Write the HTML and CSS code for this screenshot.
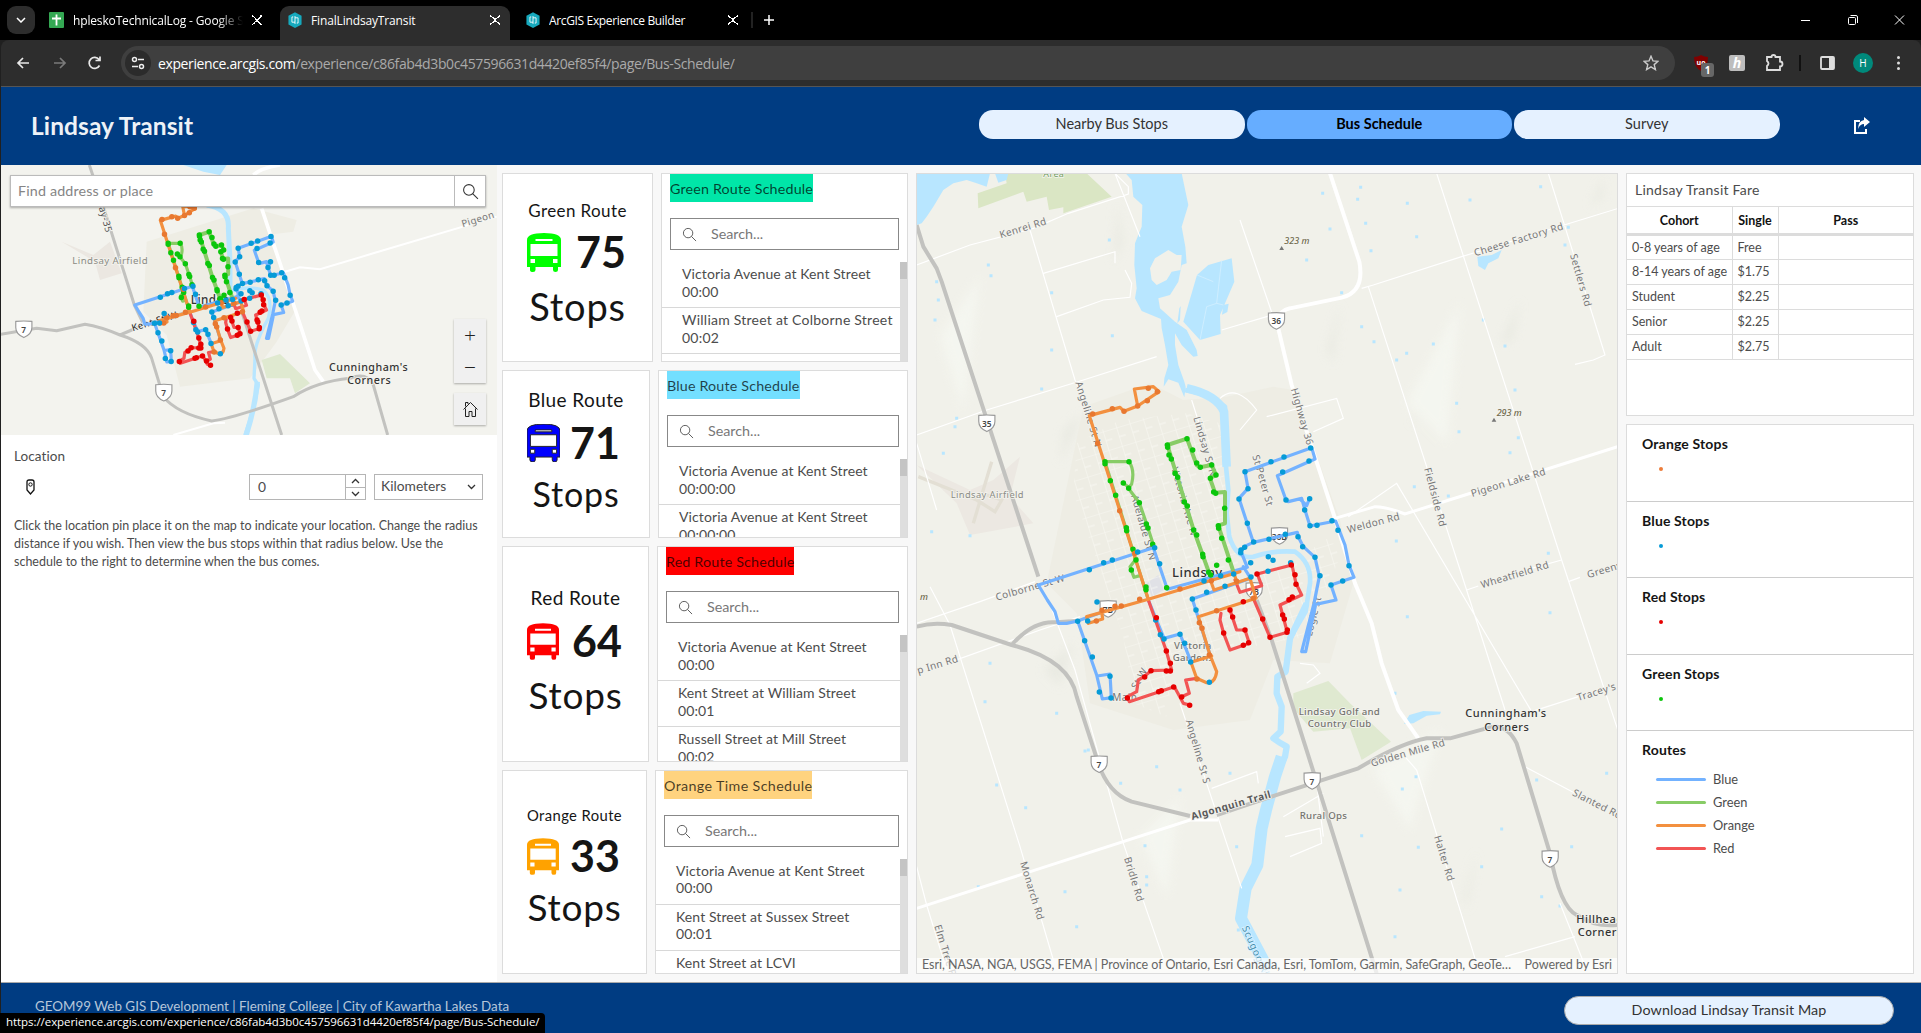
FILE: index.html
```html
<!DOCTYPE html>
<html lang="en">
<head>
<meta charset="utf-8">
<title>FinalLindsayTransit</title>
<link rel="stylesheet" href="styles.css">
</head>
<body>
<svg class="defs" width="0" height="0" aria-hidden="true">
  <defs>
    <symbol id="bus" viewBox="0 0 34 39"><path fill-rule="evenodd" d="M0 7Q0 0 17 0T34 7V34H31V37Q31 39 28.500 39Q26 39 26 37V34H8.500V37Q8.500 39 6 39Q3 39 3 37V34H0ZM8.500 6V8H25.500V6ZM3.500 11V23H30.500V11ZM3.500 26V30H8V26ZM26 26V30H30.500V26Z"/></symbol>
    <symbol id="lens" viewBox="0 0 16 16"><circle cx="6.500" cy="6.500" r="5" fill="none" stroke="currentColor"/><path d="M10 10l5 5" stroke="currentColor" fill="none"/></symbol>
    <symbol id="shield" viewBox="0 0 20 20" overflow="visible"><path d="M1.500 1.500Q10 .5 18.500 1.500V8Q18.500 15 10 18.500Q1.500 15 1.500 8Z" fill="#fff" stroke="#999" stroke-width="1.200"/></symbol>
    <symbol id="hex" viewBox="0 0 16 18"><path d="M8 0l7.500 4v10L8 18 .5 14V4z" fill="#16a9bd"/><path d="M6 5.500H4.500v6H8m2 1h1.500v-6H8m0-2v9" stroke="#fff" fill="none"/></symbol>
    <pattern id="streets" width="42" height="58" patternUnits="userSpaceOnUse" patternTransform="rotate(-17)"><path d="M0 0H42M0 0V58M0 29H21" fill="none" stroke="#fbfbf7" stroke-width="3.500"/></pattern>
    <filter id="soft"><feGaussianBlur stdDeviation="14"/></filter>
    <g id="routes">
      <path class="r blue" d="M340 533L-5 645 22 690 45 725 55 760 80 760 113 753 170 915 187 987 214 983 210 912 172 918M340 533L382 658 622 592 603 545 612 530 640 517 772 487 777 505 790 530 825 562 838 620 822 700 785 845 797 845 827 703 888 690 873 645 942 622 927 585 915 525 887 453 810 468 795 420 785 385 745 395 738 390 712 317 825 267 815 233 615 305 624 355 597 385 640 517M780 387L800 407 808 387M325 690L372 805 420 792 453 875M610 590L632 625 457 687 480 760 510 855M115 752L185 727"/>
      <path class="r green" d="M195 275L267 275Q285 300 275 342L265 355 298 398 320 462 343 533M248 338L267 352M195 275L322 680M290 565L270 590 282 622 300 617"/>
      <path class="r green wide" d="M508 610L461 480 382 225 441 206 470 285 480 292 515 285 528 315 510 325 525 368 555 366 555 460 535 467 582 610"/>
      <path class="r red" d="M325 690L378 840 395 900 333 902 312 920 295 930 290 965 262 980 268 995 403 950 430 1000 449 1005M425 980L448 970 437 930 470 925M543 730L540 750 551 790 570 840 628 820 615 780 590 780 570 720M640 685L690 802 742 787 720 705 785 675 768 640 756 585 652 612 665 647 600 667 585 630"/>
      <path class="r orange" d="M148 137L240 112 252 124 293 108 283 57 340 50 357 65 293 108M148 137L325 688 600 605M325 688L140 740 145 760 188 747 185 725M512 632L522 660 630 625 648 685 475 740 510 855 530 905Q525 940 500 938L470 925 453 877 515 858M580 605L592 640"/>
      <path class="s green" d="M195 275h0M195 281h0M267 275h0M211 332h0M227 376h0M250 339h0M266 355h0M298 398h0M259 473h0M260 482h0M319 462h0M324 474h0M279 538h0M288 570h0M274 600h0M318 651h0M318 659h0M338 523h0M382 225h0M383 232h0M441 206h0M458 240h0M387 255h0M394 267h0M470 279h0M481 292h0M515 285h0M528 315h0M511 325h0M405 310h0M413 322h0M521 366h0M527 370h0M433 396h0M442 408h0M554 415h0M535 467h0M536 475h0M461 480h0M470 495h0M545 505h0M488 553h0M489 560h0M565 570h0M530 586h0M506 607h0M512 615h0M380 653h0"/>
      <path class="s orange" d="M158 132h0M217 116h0M252 124h0M293 108h0M322 92h0M325 55h0M352 65h0M173 220h0M239 422h0M285 550h0M420 657h0M299 688h0M225 709h0M244 708h0M186 721h0M169 753h0M514 632h0M590 634h0M530 722h0M640 685h0M478 758h0M508 855h0M471 927h0M486 775h0"/>
      <path class="s blue" d="M148 599h0M191 578h0M217 570h0M293 546h0M344 533h0M359 581h0M171 696h0M113 754h0M143 753h0M134 812h0M157 861h0M210 919h0M178 966h0M213 984h0M347 750h0M361 794h0M372 807h0M420 793h0M434 820h0M452 876h0M508 937h0M468 720h0M457 687h0M500 667h0M555 649h0M492 633h0M542 617h0M581 612h0M633 621h0M632 578h0M603 540h0M602 548h0M614 532h0M641 516h0M687 508h0M736 493h0M774 500h0M788 530h0M825 562h0M840 617h0M873 645h0M908 633h0M927 587h0M894 481h0M876 452h0M831 466h0M810 467h0M794 420h0M809 386h0M738 390h0M728 306h0M807 273h0M812 234h0M732 261h0M693 275h0M615 305h0M624 356h0M597 387h0M622 460h0M685 560h0M699 571h0M684 604h0M752 578h0"/>
      <path class="s red" d="M349 743h0M379 843h0M391 880h0M379 903h0M391 903h0M333 902h0M314 921h0M262 984h0M356 965h0M364 962h0M401 951h0M425 981h0M449 1006h0M570 720h0M578 741h0M551 789h0M615 780h0M626 818h0M610 826h0M610 695h0M668 747h0M690 802h0M741 787h0M742 780h0M733 747h0M728 735h0M747 689h0M757 681h0M768 643h0M765 614h0M754 585h0M651 612h0"/>
    </g>
  </defs>
</svg>
<div class="window">
  <div class="tabs">
    <button class="tabmenu"><svg width="10" height="6" viewBox="0 0 10 6"><path d="M1 1l4 4 4-4" fill="none" stroke="#fff" stroke-width="1.500"/></svg></button>
    <div class="tab first"><svg width="15" height="16" viewBox="0 0 15 16"><rect width="15" height="16" rx="1" fill="#34a853"/><path d="M7.500 2.500v11M3 6.500h9" stroke="#fff" stroke-width="1.800"/></svg><span class="tabtext fade">hpleskoTechnicalLog - Google S</span><i class="x"></i></div>
    <div class="tab active"><svg width="14" height="16"><use href="#hex"/></svg><span class="tabtext">FinalLindsayTransit</span><i class="x"></i></div>
    <div class="tab last"><svg width="14" height="16"><use href="#hex"/></svg><span class="tabtext">ArcGIS Experience Builder</span><i class="x"></i></div>
    <svg class="plus" width="28" height="20" viewBox="0 0 28 20"><path d="M2 2v16" stroke="#444"/><path d="M14 10h10M19 5v10" stroke="#fff" stroke-width="1.500"/></svg>
    <svg class="wincontrols" width="110" height="20" viewBox="0 0 110 20" fill="none" stroke="#fff"><path d="M4 10.500h9M98 5.500l9 9m0-9l-9 9"/><rect x="51.500" y="7.500" width="7" height="7" rx="1"/><path d="M53.500 5.500h5.500q1.500 0 1.500 1.500v6"/></svg>
  </div>
  <div class="toolbar">
    <svg class="nav" width="90" height="20" viewBox="0 0 90 20" fill="none" stroke-width="1.700"><path d="M18 10H7m5-5l-5 5 5 5" stroke="#e8e8e8"/><path d="M43 10h11m-5-5l5 5-5 5" stroke="#7a7a7a"/><path d="M88 6.500a5.500 5.500 0 1 0 .5 6M89 3.500v4h-4.500" stroke="#e8e8e8"/></svg>
    <div class="omnibox"><span class="site"><svg width="14" height="14" viewBox="0 0 14 14" fill="none" stroke="#eee" stroke-width="1.500"><circle cx="3.500" cy="3.500" r="2"/><path d="M7 3.500h6M1 10.500h6"/><circle cx="10.500" cy="10.500" r="2"/></svg></span><span class="url"><b>experience.arcgis.com</b>/experience/c86fab4d3b0c457596631d4420ef85f4/page/Bus-Schedule/</span><svg class="star" width="16" height="16" viewBox="0 0 16 16"><path d="M8 1.200l2 4.700 5 .4-3.800 3.300 1.200 5L8 11.900l-4.400 2.700 1.200-5L1 6.300l5-.4z" fill="none" stroke="#ccc" stroke-width="1.400"/></svg></div>
    <div class="exts">
      <svg width="228" height="30" viewBox="1690 48 228 30"><path d="M1701 55q3 2 7 2 0 10-7 14-7-4-7-14 4 0 7-2z" fill="#800000"/><text x="1701" y="65" class="ub">uo</text><rect x="1701" y="63" width="13" height="14" rx="3" fill="#666"/><text x="1707.500" y="74" class="badge">1</text><rect x="1729" y="55" width="16" height="16" rx="2" fill="#bdbdbd"/><text x="1737" y="68" class="honey">h</text><path d="M1767 57h4.500a2 2 0 0 1 4 0h4.500v4.500a2.500 2.500 0 0 1 0 5v3.500h-13v-4q3-2.500 0-5z" fill="none" stroke="#ddd" stroke-width="1.800"/><path d="M1800 55v16" stroke="#111" stroke-width="2"/><rect x="1821" y="57" width="13" height="12" rx="1" fill="none" stroke="#ddd" stroke-width="1.800"/><path d="M1829 57h5v12h-5z" fill="#ddd"/><circle cx="1863" cy="63" r="10" fill="#00897b"/><text x="1863" y="67" class="ava">H</text><path d="M1898.500 57.500h0M1898.500 63h0M1898.500 68.500h0" stroke="#ddd" stroke-width="3" stroke-linecap="round"/></svg>
    </div>
  </div>
  <header class="head">
    <h1>Lindsay Transit</h1>
    <nav><a>Nearby Bus Stops</a><a class="on">Bus Schedule</a><a>Survey</a></nav>
    <svg class="share" width="17" height="18" viewBox="0 0 17 18"><path d="M7 4H2v12h11v-4" fill="none" stroke="#fff" stroke-width="2"/><path d="M11 0l6 5-6 5V7q-4 0-6 5 0-8 6-9z" fill="#fff"/></svg>
  </header>
  <main>
    <section class="left">
      <div class="minimap">
        <svg width="496" height="270" viewBox="1 165 496 270">
          <rect x="1" y="165" width="496" height="270" fill="#f3f3ee"/>
          <g transform="translate(0 165) scale(.33333)">
            <path d="M440 230L760 130 890 165 880 200 800 210 860 340 890 430 830 530 750 640 540 665 500 510 430 440Z" fill="#eeede4"/>
            <path d="M185 230L280 270 330 230 365 325 300 345 285 290Z" fill="#ebe7e1"/>
            <path d="M785 585L840 567 930 655 885 685 870 640 800 640Z" fill="#dfe9d0"/>
            <path d="M550 0H680L660 30 610 20Z" fill="#b8e6ff"/>
            <path d="M620 120Q690 130 685 190L690 290 690 380" class="water" stroke-width="15"/>
            <path d="M690 380Q740 360 790 375 820 400 805 460 760 540 765 580L762 640 775 660Q765 720 735 810" class="water" stroke-width="10"/>
            <path d="M772 650Q765 730 737 815" class="water" stroke-width="16"/>
            <g class="lane"><path d="M760 30Q780 10 840 0M785 130L850 325 945 615 970 650" stroke-width="11"/><path d="M850 322L900 307 960 313 1120 265 1490 155M520 810L640 775 675 773" stroke-width="6"/></g>
            <g class="hwy" stroke-width="9"><path d="M268 0L310 125 403 420 432 480"/><path d="M0 508L110 490 170 497 255 478Q300 485 360 510 440 535 455 580L490 695Q530 745 635 768 700 760 880 695 950 650 1050 640 1100 620 1120 660L1163 810M360 510L430 480 565 440M725 440L845 810" fill="none"/></g>
            <g class="maplabel" font-size="29"><text x="217" y="296" fill="#8b8b84">Lindsay Airfield</text><text x="1388" y="187" transform="rotate(-17 1388 187)">Pigeon</text><text x="296" y="128" transform="rotate(74 296 128)" fill="#555">ay-35</text></g>
            <g class="place" font-size="35"><text x="572" y="416">Lindsay</text><text x="987" y="618" font-size="32">Cunningham's</text><text x="1042" y="656" font-size="32">Corners</text><text x="398" y="499" font-size="28" transform="rotate(-17 398 499)">Kent St W</text></g>
            <g transform="translate(407 97.500) scale(.5)"><use href="#routes" class="mini"/></g>
            <use href="#shield" x="43" y="465" width="57" height="57"/><use href="#shield" x="463" y="655" width="57" height="57"/>
            <g class="num"><text x="71" y="504">7</text><text x="491" y="694">7</text></g>
          </g>
        </svg>
        <div class="find"><span>Find address or place</span><i><svg width="17" height="17"><use href="#lens"/></svg></i></div>
        <div class="zoom"><b>+</b><b>−</b></div>
        <div class="home"><svg width="15" height="16" viewBox="0 0 15 16" fill="none" stroke="#222"><path d="M.5 8.500L7.500 1.500l7 7M2.500 7.500V15.500h3.500v-5h3v5h3.500V7.500M2.500 5.500V1.500h2.500V3"/></svg></div>
      </div>
      <div class="location">
        <h2>Location</h2>
        <div class="controls">
          <svg width="10" height="16" viewBox="0 0 10 16" fill="none" stroke="#111"><path d="M1 3Q1 1 3 1H6Q8 1 8 3V11L4.500 15 1 11Z" stroke-width="1.300"/><circle cx="4.500" cy="5.500" r="1.700"/></svg>
          <div class="number"><span>0</span><i><svg width="9" height="6" viewBox="0 0 9 6"><path d="M1 5l3.500-3.500L8 5"/></svg></i><i><svg width="9" height="6" viewBox="0 0 9 6"><path d="M1 1l3.500 3.500L8 1"/></svg></i></div>
          <div class="unit"><span>Kilometers</span><svg width="9" height="6" viewBox="0 0 9 6"><path d="M1 1l3.500 3.500L8 1"/></svg></div>
        </div>
        <p>Click the location pin place it on the map to indicate your location. Change the radius<br>distance if you wish. Then view the bus stops within that radius below. Use the<br>schedule to the right to determine when the bus comes.</p>
      </div>
    </section>
    <section class="schedules">
      <div class="row green-row">
        <div class="card stat"><div class="label">Green Route</div><div class="count"><svg width="34" height="39"><use href="#bus"/></svg><strong>75</strong></div><div class="stops">Stops</div></div>
        <div class="card sched"><div class="tag">Green Route Schedule</div><div class="search"><svg width="15" height="15"><use href="#lens"/></svg><span>Search...</span></div><div class="list"><div class="items"><div>Victoria Avenue at Kent Street<br>00:00</div><div class="spaced">William Street at Colborne Street<br>00:02</div></div><div class="bar"><i></i></div></div></div>
      </div>
      <div class="row blue-row">
        <div class="card stat"><div class="label">Blue Route</div><div class="count"><svg width="33" height="38"><use href="#bus"/></svg><strong>71</strong></div><div class="stops">Stops</div></div>
        <div class="card sched"><div class="tag">Blue Route Schedule</div><div class="search"><svg width="15" height="15"><use href="#lens"/></svg><span>Search...</span></div><div class="list"><div class="items"><div>Victoria Avenue at Kent Street<br>00:00:00</div><div>Victoria Avenue at Kent Street<br>00:00:00</div></div><div class="bar"><i></i></div></div></div>
      </div>
      <div class="row red-row">
        <div class="card stat"><div class="label">Red Route</div><div class="count"><svg width="32" height="37"><use href="#bus"/></svg><strong>64</strong></div><div class="stops">Stops</div></div>
        <div class="card sched"><div class="tag">Red Route Schedule</div><div class="search"><svg width="15" height="15"><use href="#lens"/></svg><span>Search...</span></div><div class="list"><div class="items"><div>Victoria Avenue at Kent Street<br>00:00</div><div>Kent Street at William Street<br>00:01</div><div>Russell Street at Mill Street<br>00:02</div></div><div class="bar"><i></i></div></div></div>
      </div>
      <div class="row orange-row">
        <div class="card stat"><div class="label">Orange Route</div><div class="count"><svg width="32" height="37"><use href="#bus"/></svg><strong>33</strong></div><div class="stops">Stops</div></div>
        <div class="card sched"><div class="tag">Orange Time Schedule</div><div class="search"><svg width="15" height="15"><use href="#lens"/></svg><span>Search...</span></div><div class="list"><div class="items"><div>Victoria Avenue at Kent Street<br>00:00</div><div>Kent Street at Sussex Street<br>00:01</div><div>Kent Street at LCVI</div></div><div class="bar"><i></i></div></div></div>
      </div>
    </section>
    <section class="card map">
      <svg width="700" height="799" viewBox="917 174 700 799">
        <rect x="917" y="174" width="700" height="799" fill="#f1f1ea"/>
        <g transform="translate(1040 370) scale(.33333)">
          <g filter="url(#soft)" fill="#e7e8e0" opacity=".75"><path d="M230-500l20 120-30 60zM70 180L130 130 60 280zM860-60l40-140-20 180zM1380-80l60-130-20 120zM1270 1580l40-140-30 180zM10 900l90-80-40 130zM1130 140l20-60-40 90zM1650-490l40-90 0 60z"/><path fill="#f6f8f2" d="M-300-100l120-180-50 400zM300 1400l120-120-40 300zM1000 1200l200-120-90 300zM1100 100l160-300-40 420z"/></g>
          <path d="M130 110L330 40 430 90 560 80 700 50 760 60 900 450 940 640 870 880 700 870 630 1050 400 1080 150 1000 110 730 20 640Z" fill="#eeede4"/>
          <path d="M-370 285L-210 360-140 330-60 260-90 380-20 460-210 495-250 400Z" fill="#ece8e2"/>
          <path d="M-365 320L-190 390M-145 275L-200 460M-190 390L-135 425-115 390-160 375" fill="none" stroke="#e3dfd4" stroke-width="10"/>
          <path d="M-105-590H140L215-520 70-470 70-488 27-480 20-520-40-505-50-535-185-485-187-530-100-560Z" fill="#dae6c4"/>
          <path d="M760 970L865 933 930 1000 1053 1115 965 1170 930 1075 820 1085 760 1015Z" fill="#dfe9d0"/>
          <path d="M320 640L355 615 372 660 335 680Z" fill="#e0e1e6"/>
          <path d="M110 220L240 150 440 130 540 160 560 400 590 560 610 620 780 560 870 500 900 560 800 800 690 820 520 850 400 880 380 1040 280 1000 250 800 180 600 100 370Z" fill="url(#streets)" opacity=".75"/>
          <path fill="#b8e6ff" d="M257-590L275-570 280-520 307-495 305-430 285-380 283-315 290-245 285-215 305-177 363-153 365-125 375-75 385-15 373 25 371 50 385 28 415 38 433 82 437 50 433 35 415-15 405-75 405-110 425-75 460-40 473-42 470-60 440-120 405-145 360-185 355-215 390-225 415-265 425-315 440-320 436-370 425-430 445-495 425-590Z"/>
          <path fill="#f1f1ea" d="M330-305L345-335 385-360 410-345 425-345 422-300 395-295 380-270 350-255 335-270Z"/>
          <path fill="#b8e6ff" d="M471-285L505-315 575-335 583-265 540-165 542-108 480-90 430-145ZM550-195l16-4-4 25-16 8zM412-140L418-185 422-192 420-150ZM-370-590H-150L-160-550-190-560-220-570-260-560-290-540-320-490-340-460-355-440-370-435ZM-135-590h40l-5 20-25 8zM1312-340L1355-345 1385-360 1375-335 1345-320 1335-300 1315-312ZM1092 1062L1108 1035 1150 1023 1203 1025 1200 1033 1160 1037 1120 1060Z"/>
          <path d="M550-195L530-200 500-190 480-90M471-285L520-265M530-200L545-330" fill="none" stroke="#d9f1ff" stroke-width="2"/>
          <path d="M435 60Q515 75 555 110L558 290 565 360 560 430 568 500Q590 570 640 560 700 540 765 545 815 580 810 640L797 725 750 805 737 900" class="water" stroke-width="14"/>
          <path d="M440 55Q530 75 552 125L560 290" class="water" stroke-width="26"/>
          <path d="M800 700L750 805 737 905 712 920 710 970 725 1010 722 1085 700 1105Q720 1120 740 1130L735 1160 712 1205" class="water" stroke-width="19"/>
          <path d="M725 1160L705 1220 678 1320 665 1375 652 1485 617 1555 603 1645 685 1800" class="water" stroke-width="36"/>
          <path d="M-155-315h0M-147-283h0M35-232h0M35-60h0M208-390h0M217-103h0M5 57h0M-250 145h0M-255 170h0M-210 497h0M-310-265h0M-305-210h0M-315-150h0M-290 250h0M-325 485h0M145 1140h0M242 1240h0M350 1190h0M420 1260h0M570 1210h0M315 1427h0M320 1520h0M320 1545h0M75 1565h0M110 1670h0M-43 1313h0M-150 880h0M-165 995h0M-130 1245h0M-185 1550h0M135 1143h0M50 1030h0M680 1350h0M590 1430h0M595 1680h0" stroke="#b8e6ff" stroke-width="9" stroke-linecap="square"/>
          <path transform="translate(-215)" d="M1063-530h0M1168-512h0M1177-548h0M1317-500h0M1505-510h0M1717-550h0M1192-440h0M1345-400h0M1208-358h0M1085-423h0M1120-232h0M1015-330h0M1180-130h0M1217-85h0M1285-30h0M1315-50h0M1395-78h0M1545-150h0M1610-72h0M1640 60h0M1465 100h0M1472 185h0M1650 203h0M1625 248h0M1440 378h0M1338 350h0M1284 513h0M1740 550h0M1317 740h0M1745 728h0M1800-428h0M1790-375h0M1280 970h0M1343 1220h0M1302 1257h0M1180 1397h0M1600 1377h0M1350 1432h0M1540 1490h0M1295 1560h0M1280 1700h0M1810 1430h0M1720 1580h0M1775 1608h0M1705 1230h0M1915 1210h0" stroke="#b8e6ff" stroke-width="9" stroke-linecap="square"/>
          <g class="lane" stroke-width="3.500">
            <path d="M-370-315L-210-375-20-425 85-470 265-528 265-550 225-590M-30-420L105 30 148 135M10-290L225-355V-320M50-160L190-210 270-218 275-260 255-300M-370 195L-160 120 130 30 350-40M225-590L300-400M1190-590L1565 570 1735 1085M1525-590L1695-45 1660-30 1605-17M965-245L1000-255 1265-340 1735-485M985-250L1275 645 1395 1020M545-120L680-160 740-178M600-450L710-130M925 440L1070 340 1475 1025M1280 660L1315 648M1475 595L1565 570M1585 635L1620 622M1475 1025L1615 980M1455 1190L1615 1275M1095 1160L1130 1200 1305 1765M1395 1760L1605 1700M1560 1600L1630 1775M-330 650L-270 765-60 1430 40 1770M-370 760L-180 695-15 635M-280 880L0 780 120 740M-370 220L-310 420M25 690L105 900 250 1420 370 1765M420 1000L605 1555M-370 1490L-340 1605-280 1800M540 85Q590 40 650 120L600 180M455 90L490 200M680 140L890 85 910 145 820 185M850 1270L730 1340M830 1240L850 1400M735 1400L840 1375 845 1420 750 1460M515 1255L650 1205 655 1240M780 880L820 885 840 910 800 940"/>
            <path d="M870-590L958-325Q975-235 905-217L750-185Q720-180 710-145L755 45 885 445 945 640 995 760 1025 880 1075 1020 1135 1105" stroke-width="12"/>
            <path d="M885 445L1005 410Q1040 410 1095 432L1275 375 1740 228M-370 1615L450 1350 535 1350" stroke-width="9"/>
          </g>
          <g class="hwy" stroke-width="12"><path d="M-370-435L-350-370-310-305-295-265-5 620"/><path d="M-370 770Q-320 755-265 765L-85 825Q90 870 110 980L175 1180Q205 1270 275 1295L450 1338M530 1335L715 1273 955 1195Q1080 1120 1160 1105L1230 1105 1350 1072Q1400 1060 1430 1120L1530 1450Q1560 1610 1610 1635 1670 1675 1745 1663M-85 825Q-20 750 50 757L115 752M650 690L695 810 825 1220 1010 1810"/></g>
          <g class="maplabel" font-size="30">
            <text x="-118" y="-395" transform="rotate(-17 -118 -395)">Kenrei Rd</text><text x="10" y="-580" fill="#6f9d5d" font-size="27">Area</text><text x="-268" y="383" fill="#8b8b84" font-size="28">Lindsay Airfield</text>
            <text x="106" y="38" transform="rotate(73 106 38)">Angeline St N</text><text x="460" y="143" transform="rotate(74 460 143)">Lindsay St N</text><text x="637" y="258" transform="rotate(74 637 258)">St Peter St</text><text x="394" y="295" transform="rotate(74 394 295)">Victoria Ave N</text><text x="273" y="378" transform="rotate(74 273 378)">Adelaide St N</text>
            <text x="752" y="58" transform="rotate(74 752 58)">Highway 36</text><text x="925" y="490" transform="rotate(-15 925 490)">Weldon Rd</text><text x="1306" y="-341" transform="rotate(-17 1306 -341)">Cheese Factory Rd</text><text x="1590" y="-345" transform="rotate(74 1590 -345)">Settlers Rd</text><text x="1297" y="381" transform="rotate(-17 1297 381)">Pigeon Lake Rd</text><text x="1152" y="296" transform="rotate(75 1152 296)">Fieldside Rd</text><text x="1326" y="655" transform="rotate(-17 1326 655)">Wheatfield Rd</text><text x="1645" y="625" transform="rotate(-17 1645 625)">Greenwood</text><text x="1615" y="993" transform="rotate(-17 1615 993)">Tracey's</text><text x="1595" y="1275" transform="rotate(27 1595 1275)">Slanted Rd</text>
            <text x="-130" y="692" transform="rotate(-16 -130 692)">Colborne St W</text><text x="-365" y="912" transform="rotate(-17 -365 912)">p Inn Rd</text><text x="-60" y="1478" transform="rotate(73 -60 1478)">Monarch Rd</text><text x="252" y="1465" transform="rotate(73 252 1465)">Bridle Rd</text><text x="-317" y="1668" transform="rotate(73 -317 1668)">Elm Tree Rd</text><text x="437" y="1052" transform="rotate(74 437 1052)">Angeline St S</text><text x="217" y="992">Main</text><text x="290" y="960" transform="rotate(-60 290 960)">St W</text><text x="815" y="800" transform="rotate(-76 815 800)">Logie St</text><text x="996" y="1190" transform="rotate(-16 996 1190)">Golden Mile Rd</text><text x="1182" y="1400" transform="rotate(73 1182 1400)">Halter Rd</text>
            <g class="elev"><text x="733" y="-378">323 m</text><text x="1370" y="138">293 m</text><text x="-360" y="690">m</text></g>
            <g class="poi"><text x="402" y="837">Victoria</text><text x="398" y="873">Gardens</text><text x="776" y="1036">Lindsay Golf and</text><text x="803" y="1070">Country Club</text><text x="779" y="1347">Rural Ops</text></g>
            <text class="river" x="605" y="1673" transform="rotate(66 605 1673)">Scugog River</text>
          </g>
          <path d="M718-360l7-12 7 12zM1355 155l7-12 7 12z" fill="#777"/>
          <g class="place" font-size="33"><text x="396" y="622" font-size="39">Lindsay</text><text x="1276" y="1042">Cunningham's</text><text x="1333" y="1082">Corners</text><text x="1609" y="1659">Hillhead</text><text x="1613" y="1698">Corners</text><text class="trail" x="457" y="1350" transform="rotate(-16 457 1350)">Algonquin Trail</text></g>
          <g class="shields"><use href="#shield" x="-188" y="132" width="57" height="57"/><use href="#shield" x="681" y="-175" width="57" height="57"/><use href="#shield" x="690" y="470" width="57" height="57"/><use href="#shield" x="176" y="689" width="57" height="57"/><use href="#shield" x="614" y="635" width="57" height="57"/><use href="#shield" x="149" y="1155" width="57" height="57"/><use href="#shield" x="788" y="1205" width="57" height="57"/><use href="#shield" x="1502" y="1439" width="57" height="57"/></g>
          <g class="num"><text x="-160" y="170">35</text><text x="709" y="-137">36</text><text x="718" y="509">36B</text><text x="204" y="728">7B</text><text x="642" y="675">7B</text><text x="177" y="1194">7</text><text x="816" y="1244">7</text><text x="1530" y="1478">7</text></g>
          <use href="#routes"/>
        </g>
      </svg>
      <div class="attr"><span>Esri, NASA, NGA, USGS, FEMA | Province of Ontario, Esri Canada, Esri, TomTom, Garmin, SafeGraph, GeoTe…</span><span>Powered by Esri</span></div>
    </section>
    <aside>
      <div class="card fare">
        <h3>Lindsay Transit Fare</h3>
        <table><colgroup><col class="c1"><col class="c2"><col></colgroup><tr><th>Cohort</th><th>Single</th><th>Pass</th></tr><tr><td>0-8 years of age</td><td>Free</td><td></td></tr><tr><td>8-14 years of age</td><td>$1.75</td><td></td></tr><tr><td>Student</td><td>$2.25</td><td></td></tr><tr><td>Senior</td><td>$2.25</td><td></td></tr><tr><td>Adult</td><td>$2.75</td><td></td></tr></table>
      </div>
      <div class="card legend">
        <div class="sec"><h4>Orange Stops</h4><i class="dot o"></i></div><div class="sec"><h4>Blue Stops</h4><i class="dot b"></i></div><div class="sec"><h4>Red Stops</h4><i class="dot rd"></i></div><div class="sec"><h4>Green Stops</h4><i class="dot g"></i></div>
        <div class="sec routes"><h4>Routes</h4><ul><li class="lb">Blue</li><li class="lg">Green</li><li class="lo">Orange</li><li class="lr">Red</li></ul></div>
      </div>
    </aside>
  </main>
  <footer><span>GEOM99 Web GIS Development | Fleming College | City of Kawartha Lakes Data</span><a>Download Lindsay Transit Map</a></footer>
  <div class="status">https://experience.arcgis.com/experience/c86fab4d3b0c457596631d4420ef85f4/page/Bus-Schedule/</div>
</div>
</body>
</html>
```
FILE: styles.css
```css
* { box-sizing: border-box; }
body { margin: 0; background: #000; font-family: Lato, sans-serif; color: #4c4c4c; }
h1, h2, h3, h4, p, ul { margin: 0; padding: 0; font-weight: 400; }
i { font-style: normal; }
svg { display: block; flex: none; }
.defs { position: absolute; }
.window { position: relative; width: 1921px; height: 1033px; overflow: hidden; display: flex; flex-direction: column; padding-left: 1px; background: #202020; }

/* browser frame */
.tabs { height: 40px; flex: none; margin-left: -1px; background: #000; display: flex; align-items: center; padding: 0 14px 0 7px; font: 12px "Open Sans", sans-serif; color: #fff; letter-spacing: -.15px; }
.tabmenu { width: 28px; height: 28px; padding: 0; border: 0; border-radius: 9px; background: #2d2d2d; display: grid; place-items: center; }
.tab { display: flex; align-items: center; height: 34px; margin-top: 6px; padding-bottom: 6px; }
.tab.first { width: 245px; padding-left: 14px; padding-right: 18px; }
.tab.active { width: 230px; padding-left: 8px; padding-right: 10px; background: #2d2d2d; border-radius: 9px 9px 0 0; }
.tab.last { width: 238px; padding-left: 16px; padding-right: 10px; letter-spacing: -.35px; }
.tabtext { flex: 1; margin-left: 9px; white-space: nowrap; overflow: hidden; }
.fade { flex: none; width: 170px; margin-right: 9px; mask-image: linear-gradient(90deg, #000 85%, transparent); }
.x { width: 10px; height: 10px; margin-left: auto; background: linear-gradient(45deg, transparent 45%, #fff 45% 55%, transparent 55%), linear-gradient(-45deg, transparent 45%, #fff 45% 55%, transparent 55%); }
.plus { margin-left: 2px; }
.wincontrols { margin-left: auto; }
.toolbar { height: 46px; flex: none; background: #2d2d2d; border-radius: 8px 8px 0 0; display: flex; align-items: center; padding: 0 2px 0 10px; }
.nav { margin-right: 20px; }
.omnibox { width: 1554px; height: 34px; border-radius: 17px; background: #3f3f3f; display: flex; align-items: center; padding: 0 16px 0 4px; }
.site { width: 26px; height: 26px; border-radius: 50%; background: #2b2b2b; display: grid; place-items: center; margin-right: 7px; }
.url { font: 14px "Open Sans", sans-serif; letter-spacing: -.38px; color: #aaa; }
.url b { color: #fff; font-weight: 400; }
.star { margin-left: auto; }
.exts { margin-left: 15px; }
.ub { font: 700 7px "Open Sans", sans-serif; fill: #fff; text-anchor: middle; }
.badge { font: 700 10px "Open Sans", sans-serif; fill: #fff; text-anchor: middle; }
.honey { font: italic 700 14px "Open Sans", sans-serif; fill: #fff; text-anchor: middle; }
.ava { font: 10px "Open Sans", sans-serif; fill: #fff; text-anchor: middle; }

/* page header */
.head { height: 79px; flex: none; background: #003c82; border-top: 1px solid #555; display: flex; align-items: center; padding: 0 51px 0 30px; }
h1 { width: 948px; margin-bottom: 2px; font-size: 24.500px; font-weight: 700; color: #eef2f7; letter-spacing: .1px; }
nav { display: flex; gap: 2px; margin-bottom: 4px; }
nav a { width: 265.500px; height: 29px; border-radius: 14px; background: #e5f1ff; color: #333; font-size: 14.500px; text-align: center; line-height: 27px; }
nav .on { background: #66adff; color: #000; font-weight: 700; }
.share { margin-left: auto; }

main { height: 817px; flex: none; display: flex; background: #f8f8f8; }
.card { background: #fff; border: 1px solid #dcdcdc; overflow: hidden; }

/* left column */
.left { width: 496px; background: #fff; }
.minimap { position: relative; height: 270px; overflow: hidden; }
.find { position: absolute; left: 9px; top: 10px; width: 476px; height: 32px; background: #fff; border: 1px solid #bbb; box-shadow: 0 1px 2px rgba(0,0,0,.3); display: flex; font-size: 14.300px; letter-spacing: .15px; line-height: 29px; color: #858585; padding-left: 7px; }
.find i { margin-left: auto; width: 31px; border-left: 1px solid #bbb; color: #333; display: grid; place-items: center; }
.zoom, .home { position: absolute; left: 453px; width: 32px; background: #f0f0f0; box-shadow: 0 1px 2px rgba(0,0,0,.3); }
.zoom { top: 154px; }
.zoom b { display: block; height: 32px; text-align: center; font: 300 21px/32px "Open Sans", sans-serif; color: #222; }
.home { top: 228px; height: 32px; display: grid; place-items: center; }
.location { padding: 10px 13px; }
h2 { font-size: 13.500px; line-height: 22px; letter-spacing: .1px; }
.controls { display: flex; align-items: center; height: 26px; margin-top: 7px; padding-left: 12px; font-size: 13.800px; }
.number { width: 117px; height: 26px; margin-left: 213px; border: 1px solid #b5b5b5; display: grid; grid-template-columns: 1fr 20px; grid-template-rows: 12px 12px; }
.number span { grid-row: 1 / 3; padding-left: 8px; line-height: 23px; }
.number i { border-left: 1px solid #b5b5b5; display: grid; place-items: center; }
.number i + i { border-top: 1px solid #b5b5b5; }
.number svg, .unit svg { fill: none; stroke: #333; stroke-width: 1.300; }
.unit { width: 109px; height: 26px; margin-left: 8px; border: 1px solid #b5b5b5; display: flex; align-items: center; justify-content: space-between; padding: 0 6px; }
.unit span { line-height: 22px; margin-bottom: 2px; }
.location p { margin-top: 17px; font-size: 12.500px; line-height: 18px; white-space: nowrap; }

/* route counts and schedules */
.schedules { width: 406px; margin: 8px 0 8px 5px; display: flex; flex-direction: column; gap: 8px; }
.row { display: flex; gap: 8px; }
.sched { flex: 1; display: flex; flex-direction: column; }
.green-row { height: 189px; --route: #0f0; --tag: #00e6a8; }
.blue-row { height: 168px; --route: #00f; --tag: #73dfff; }
.red-row { height: 216px; --route: #f00; --tag: #f00; }
.orange-row { height: 204px; --route: #ffa200; --tag: #ffd37f; }
.stat { text-align: center; color: #151515; white-space: nowrap; }
.stat svg { fill: var(--route); }
.blue-row .stat svg { stroke: #222; stroke-width: 1; }
.green-row .stat { width: 151px; padding-top: 22px; }
.blue-row .stat { width: 148px; padding-top: 14px; }
.red-row .stat { width: 147px; padding-top: 36px; }
.orange-row .stat { width: 145px; padding-top: 29px; }
.label { height: 30px; line-height: 30px; font-size: 17px; letter-spacing: .4px; }
.blue-row .label, .red-row .label { font-size: 19px; }
.orange-row .label { font-size: 14.800px; }
.count { height: 50px; display: flex; align-items: center; justify-content: space-between; padding: 0 26px 0 24px; }
strong { font-size: 43px; line-height: 50px; font-weight: 700; }
.stops { height: 50px; line-height: 48px; font-size: 38px; letter-spacing: .8px; }
.green-row .count { margin: 1px 0 5px; }
.blue-row .count { margin: 3px 0 2px; }
.red-row .count { margin: 3px 0 5px; }
.orange-row .count { margin: 1px 0 2px; }
.blue-row .stops { font-size: 34px; }
.blue-row .count { padding-right: 29px; }
.red-row .stops, .orange-row .stops { font-size: 37px; }
.tag { align-self: flex-start; margin-left: 8px; height: 28px; line-height: 30px; font-size: 14.300px; letter-spacing: .16px; background: var(--tag); color: rgba(0,0,0,.72); white-space: nowrap; }
.orange-row .tag { letter-spacing: .35px; }
.search { flex: none; height: 32px; margin: 16px 8px 12px; border: 1px solid #888; display: flex; align-items: center; padding-left: 11px; color: #777; font-size: 14.300px; }
.search span { margin-bottom: 2px; }
.search svg { color: #555; margin-right: 14px; }
.list { flex: 1; min-height: 0; display: flex; overflow: hidden; }
.items { flex: 1; }
.items div { height: 46px; padding: 3px 0 0 20px; line-height: 18px; border-bottom: 1px solid #d8d8d8; font-size: 14px; letter-spacing: .1px; white-space: nowrap; }
.items .spaced { letter-spacing: .24px; }
.orange-row .items div { line-height: 17px; }
.bar { width: 7px; background: #dedede; }
.bar i { display: block; height: 17px; background: #c4c4c4; }

/* maps */
.map { width: 702px; margin: 8px; position: relative; }
.attr { position: absolute; left: 0; right: 0; bottom: 0; height: 15px; background: rgba(255,255,255,.7); display: flex; justify-content: space-between; padding: 0 5px; font-size: 12.500px; line-height: 14px; letter-spacing: -.03px; color: #666; white-space: nowrap; }
.r { fill: none; stroke-width: 3.200px; stroke-linejoin: round; stroke-linecap: round; vector-effect: non-scaling-stroke; }
.r.blue { stroke: #73b2ff; }
.r.green { stroke: #88cc66; }
.r.red { stroke: #f25454; }
.r.orange { stroke: #f3903f; }
.r.wide { stroke-width: 4px; }
.s { fill: none; stroke-width: 5.500px; stroke-linecap: round; vector-effect: non-scaling-stroke; }
.s.blue { stroke: #069bd7; }
.s.green { stroke: #0bc60b; }
.s.red { stroke: #e60000; }
.s.orange { stroke: #e87830; }
.water { fill: none; stroke: #b8e6ff; stroke-linejoin: round; }
.lane { fill: none; stroke: #fff; }
.hwy { fill: none; stroke: #c2c2bf; stroke-linejoin: round; }
.maplabel { font-family: "Noto Sans", sans-serif; fill: #777; letter-spacing: 1.200px; stroke: #f3f3ee; stroke-width: 5px; paint-order: stroke; }
.poi { font-size: 29px; fill: #73736e; font-weight: 500; letter-spacing: .9px; }
.elev { font-size: 27px; font-style: italic; font-weight: 500; fill: #716b4d; letter-spacing: 0; }
.river { fill: #418eae; stroke: #d9f1ff; letter-spacing: 2.500px; }
.place { font-family: "Noto Sans", sans-serif; font-weight: 500; fill: #333; letter-spacing: 1.500px; stroke: #f3f3ee; stroke-width: 5px; paint-order: stroke; }
.trail { font-size: 30px; font-weight: 700; fill: #5a5a5a; }
.num { font: 600 25px "Noto Sans", sans-serif; fill: #444; text-anchor: middle; }

/* right column */
aside { width: 288px; margin: 8px 0; display: flex; flex-direction: column; gap: 8px; }
.fare { height: 243px; }
h3 { height: 32px; padding-left: 8px; font-size: 14px; line-height: 31px; letter-spacing: .25px; }
table { width: 286px; border-collapse: collapse; table-layout: fixed; font-size: 12.500px; white-space: nowrap; }
.c1 { width: 105px; }
.c2 { width: 46px; }
th, td { height: 25px; padding: 0 5px; border: 1px solid #dcdcdc; }
td { padding-bottom: 1px; }
th:first-child, td:first-child { border-left: 0; }
th:last-child, td:last-child { border-right: 0; }
th { height: 28px; color: #111; font-weight: 700; border-bottom: 3px solid #dcdcdc; font-size: 12.500px; }
.legend { flex: 1; }
.sec { height: 76.500px; border-bottom: 1px solid #ccc; padding: 8px 15px 0; }
h4 { font-size: 14px; line-height: 22px; font-weight: 700; color: #151515; letter-spacing: .15px; }
.dot { display: block; width: 4px; height: 4px; border-radius: 50%; margin: 12px 0 0 17px; }
.o { background: #ed7d3a; } .b { background: #069bd7; } .rd { background: #e60000; } .g { background: #0bc60b; }
.routes { height: auto; border: 0; }
ul { list-style: none; padding: 7px 0 0 14px; }
li { height: 23px; line-height: 23px; font-size: 12.800px; display: flex; align-items: center; gap: 7px; }
li::before { content: ""; width: 50px; height: 3px; border-radius: 2px; background: var(--c); }
.lb { --c: #73b2ff; } .lg { --c: #88cc66; } .lo { --c: #f3903f; } .lr { --c: #f25454; }

footer { height: 51px; flex: none; border-top: 1px solid #aaa; background: #003c82; display: flex; justify-content: space-between; padding: 13px 27px 0 34px; font-size: 13.400px; color: #b5c6da; }
footer span { line-height: 20px; }
footer a { width: 330px; height: 29px; border: 1px solid #aaa; border-radius: 15px; background: #e5f1ff; color: #333; text-align: center; line-height: 25px; font-size: 14.300px; letter-spacing: .1px; }
.status { position: absolute; left: 0; bottom: 0; width: 545px; height: 20px; background: #000; color: #fff; border-radius: 0 4px 0 0; padding-left: 6px; font: 11.500px/18px "Open Sans", sans-serif; letter-spacing: -.06px; white-space: nowrap; }
```
